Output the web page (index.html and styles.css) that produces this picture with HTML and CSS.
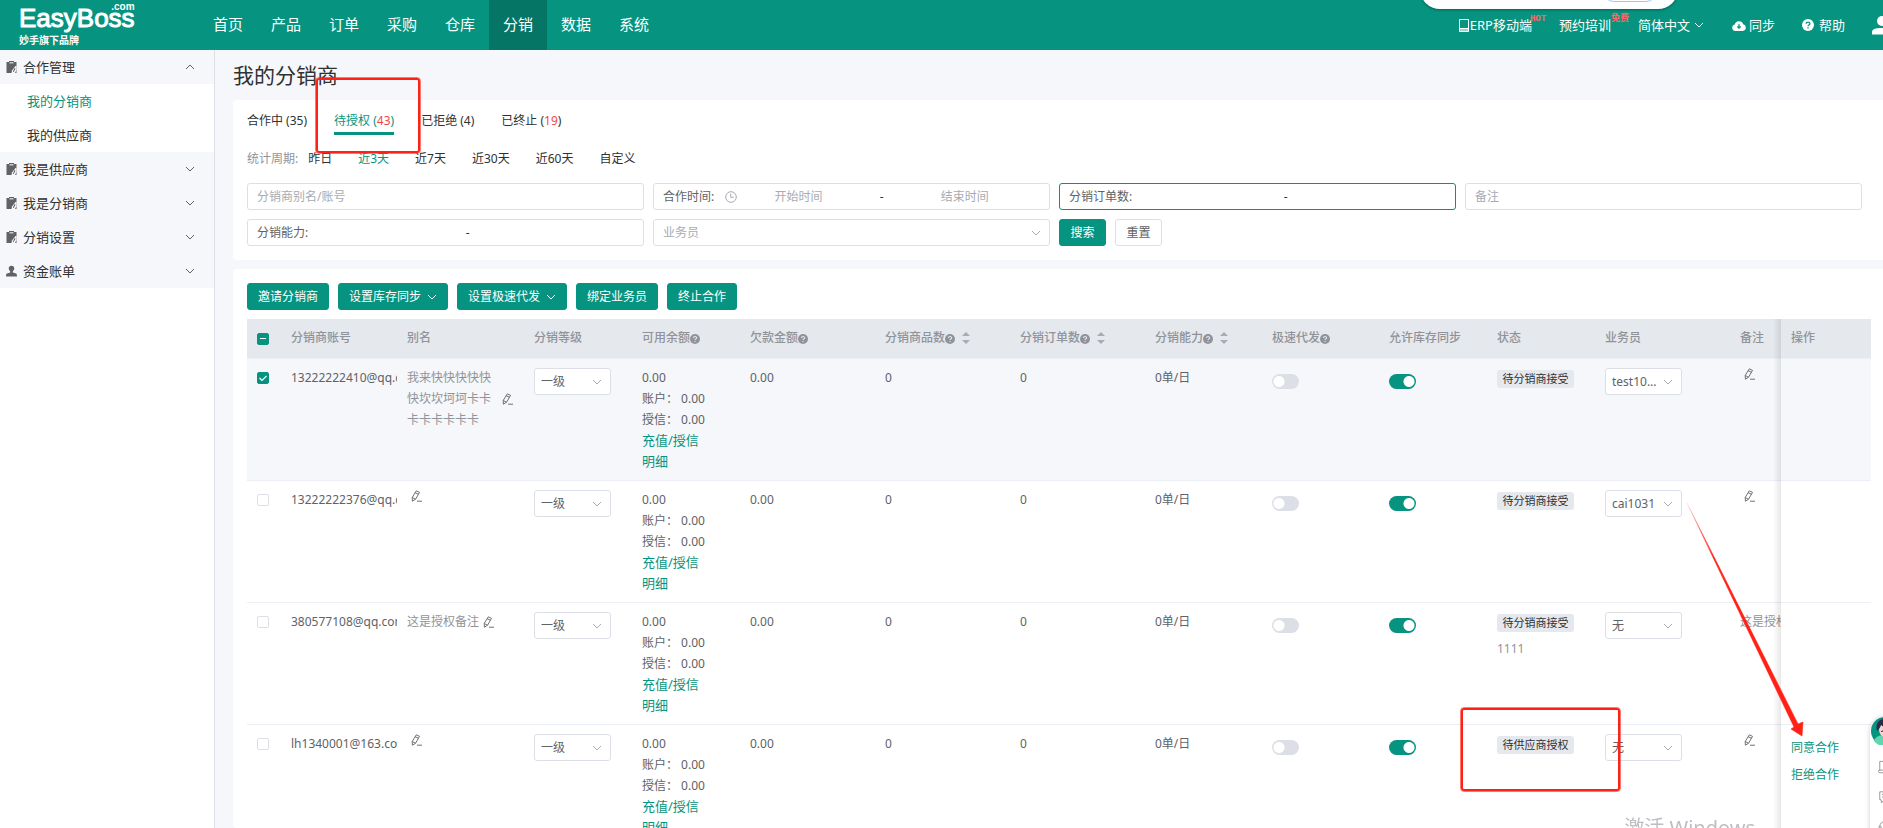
FILE: index.html
```html
<!DOCTYPE html>
<html lang="zh-CN">
<head>
<meta charset="utf-8">
<title>我的分销商 - EasyBoss</title>
<link rel="stylesheet" href="styles.css">
</head>
<body>
<svg class="sprite" aria-hidden="true">
  <symbol id="i-down" viewBox="0 0 10 10"><path d="M1 3l4 4 4-4" fill="none" stroke="currentColor"/></symbol>
  <symbol id="i-up" viewBox="0 0 10 10"><path d="M1 7l4-4 4 4" fill="none" stroke="currentColor"/></symbol>
  <symbol id="i-clip" viewBox="0 0 10 12"><path d="M0 1h2.500V0h5v1H10v11H0z" fill="#606266"/><path d="M3 1h4v1.500H3z" fill="#c5c8ce"/><path d="M9 5L5.500 9.500 5 12h3.500L10 9V5z" fill="#f5f7fa"/><path d="M8 7l1 .7L7.200 11H6.300z" fill="#606266"/></symbol>
  <symbol id="i-person" viewBox="0 0 12 12"><circle cx="6" cy="3.300" r="3"/><path d="M4.500 6h3v1.500l3.500 1.300c.6.300 1 1.200 1 3.200H0c0-2 .4-2.900 1-3.200l3.500-1.300z"/></symbol>
  <symbol id="i-pen" viewBox="0 0 12 12"><g fill="none" stroke="currentColor" stroke-width=".9"><path d="M5.300.8L8.500 2.300 4.600 9.200 1.400 11.200 1.200 7.500z"/><path d="M4.100 2.700l3.300 1.500M1.300 7.600l3.200 1.600M6 11.200h5"/></g></symbol>
  <symbol id="i-q" viewBox="0 0 12 12"><circle cx="6" cy="6" r="6" fill="currentColor"/><path d="M4.200 4.800C4.200 2.500 7.900 2.500 7.900 4.700 7.900 6 6 6 6 7.300M6 8.300v1.300" fill="none" stroke="var(--q)" stroke-width="1.300"/></symbol>
  <symbol id="i-sort" viewBox="0 0 8 12"><path d="M4 0l4 4H0zM4 12l4-4H0z" fill="#a8abb2"/></symbol>
</svg>

<div class="app">
  <header class="topbar">
    <a class="brand" href="#"><span class="brand-name">EasyBoss<span class="brand-com">.com</span></span><span class="brand-sub">妙手旗下品牌</span></a>
    <nav class="nav">
      <a href="#">首页</a><a href="#">产品</a><a href="#">订单</a><a href="#">采购</a><a href="#">仓库</a><a href="#" class="on">分销</a><a href="#">数据</a><a href="#">系统</a>
    </nav>
    <div class="tools">
      <a href="#"><svg class="phone" viewBox="0 0 10 13"><path d="M.5.5h9v12h-9zM1 9.500h8" fill="none" stroke="#fff"/><path d="M1 10h8v2.500H1z" fill="#fff" opacity=".6"/></svg>ERP移动端<span class="badge hot">HOT</span></a>
      <a href="#">预约培训<span class="badge">免费</span></a>
      <a href="#">简体中文<svg class="chev lang"><use href="#i-down"/></svg></a>
      <a href="#"><svg class="cloud" viewBox="0 0 14 11"><path d="M3.500 11a3.300 3.300 0 0 1-.8-6.500A4.400 4.400 0 0 1 11.200 4.300 3.400 3.400 0 0 1 10.700 11z" fill="#fff"/><path d="M7 4v4M5.300 6.500L7 8.200l1.700-1.700" fill="none" stroke="#069480" stroke-width="1.200"/></svg>同步</a>
      <a href="#"><svg class="help"><use href="#i-q"/></svg>帮助</a>
      <a href="#" aria-label="个人中心"><svg class="me" viewBox="0 0 20 19"><circle cx="10" cy="5" r="5" fill="#fff"/><path d="M0 18.500v-2C0 13 3 12 10 12s10 1 10 4.500v2z" fill="#fff"/></svg></a>
    </div>
    <div class="pill"><i></i></div>
  </header>

  <div class="body">
    <aside class="side">
      <button class="group"><svg class="gi"><use href="#i-clip"/></svg>合作管理<svg class="chev"><use href="#i-up"/></svg></button>
      <a class="sub on" href="#">我的分销商</a>
      <a class="sub" href="#">我的供应商</a>
      <button class="group"><svg class="gi"><use href="#i-clip"/></svg>我是供应商<svg class="chev"><use href="#i-down"/></svg></button>
      <button class="group"><svg class="gi"><use href="#i-clip"/></svg>我是分销商<svg class="chev"><use href="#i-down"/></svg></button>
      <button class="group"><svg class="gi"><use href="#i-clip"/></svg>分销设置<svg class="chev"><use href="#i-down"/></svg></button>
      <button class="group"><svg class="gi"><use href="#i-person"/></svg>资金账单<svg class="chev"><use href="#i-down"/></svg></button>
    </aside>

    <main class="main">
      <h1>我的分销商</h1>

      <section class="card filters">
        <div class="tabs">
          <button>合作中 (35)</button>
          <button class="on">待授权 (<em>43</em>)</button>
          <button>已拒绝 (4)</button>
          <button>已终止 (<em>19</em>)</button>
        </div>
        <div class="period">
          <span>统计周期:</span>
          <div class="days"><button>昨日</button><button class="on">近3天</button><button>近7天</button><button>近30天</button><button>近60天</button><button>自定义</button></div>
        </div>
        <form class="grid">
          <div class="field"><input aria-label="分销商别名/账号" placeholder="分销商别名/账号"></div>
          <div class="field time"><label for="t1">合作时间:</label><svg class="clock" viewBox="0 0 12 12"><g fill="none" stroke="#a8abb2"><circle cx="6" cy="6" r="5.300"/><path d="M5.700 2.800v3.500h3"/></g></svg><input id="t1" placeholder="开始时间"><b>-</b><input aria-label="结束时间" placeholder="结束时间"></div>
          <div class="field range focus"><label for="n1">分销订单数:</label><input id="n1"><b>-</b><input aria-label="分销订单数上限"></div>
          <div class="field"><input aria-label="备注" placeholder="备注"></div>
          <div class="field range"><label for="c1">分销能力:</label><input id="c1"><b>-</b><input aria-label="分销能力上限"></div>
          <select class="field pick" aria-label="业务员"><option>业务员</option></select>
          <div class="acts"><button type="button" class="btn primary">搜索</button><button type="button" class="btn">重置</button></div>
        </form>
      </section>

      <section class="card list">
        <div class="bar">
          <button class="btn primary">邀请分销商</button>
          <button class="btn primary">设置库存同步<svg class="chev"><use href="#i-down"/></svg></button>
          <button class="btn primary">设置极速代发<svg class="chev"><use href="#i-down"/></svg></button>
          <button class="btn primary">绑定业务员</button>
          <button class="btn primary">终止合作</button>
        </div>
        <div class="scroller">
          <table>
            <colgroup><col class="w34"><col class="w116"><col class="w127"><col class="w108"><col class="w108"><col class="w135"><col class="w135"><col class="w135"><col class="w117"><col class="w117"><col class="w108"><col class="w108"><col class="w135"><col class="w135"><col class="w90"></colgroup>
            <thead>
              <tr>
                <th><input type="checkbox" class="box part" aria-label="全选"></th>
                <th>分销商账号</th><th>别名</th><th>分销等级</th>
                <th>可用余额<svg class="q"><use href="#i-q"/></svg></th>
                <th>欠款金额<svg class="q"><use href="#i-q"/></svg></th>
                <th>分销商品数<svg class="q"><use href="#i-q"/></svg><svg class="sort"><use href="#i-sort"/></svg></th>
                <th>分销订单数<svg class="q"><use href="#i-q"/></svg><svg class="sort"><use href="#i-sort"/></svg></th>
                <th>分销能力<svg class="q"><use href="#i-q"/></svg><svg class="sort"><use href="#i-sort"/></svg></th>
                <th>极速代发<svg class="q"><use href="#i-q"/></svg></th>
                <th>允许库存同步</th><th>状态</th><th>业务员</th><th>备注</th><th class="fix">操作</th>
              </tr>
            </thead>
            <tbody>
              <tr class="sel">
                <td><input type="checkbox" class="box" checked aria-label="选择"></td>
                <td class="acc">13222222410@qq.com</td>
                <td><div class="note"><span>我来快快快快快快坎坎坷坷卡卡卡卡卡卡卡卡</span><svg class="pen"><use href="#i-pen"/></svg></div></td>
                <td><select class="mini" aria-label="分销等级"><option>一级</option></select></td>
                <td>0.00<br>账户： 0.00<br>授信： 0.00<br><a href="#">充值/授信</a><a href="#">明细</a></td>
                <td>0.00</td><td>0</td><td>0</td><td>0单/日</td>
                <td><input type="checkbox" class="switch" aria-label="极速代发"></td>
                <td><input type="checkbox" class="switch" checked aria-label="允许库存同步"></td>
                <td><span class="tag">待分销商接受</span></td>
                <td><select class="mini" aria-label="业务员"><option>test10...</option></select></td>
                <td><div class="note"><svg class="pen"><use href="#i-pen"/></svg></div></td>
                <td class="fix"></td>
              </tr>
              <tr>
                <td><input type="checkbox" class="box" aria-label="选择"></td>
                <td class="acc">13222222376@qq.com</td>
                <td><div class="note"><svg class="pen"><use href="#i-pen"/></svg></div></td>
                <td><select class="mini" aria-label="分销等级"><option>一级</option></select></td>
                <td>0.00<br>账户： 0.00<br>授信： 0.00<br><a href="#">充值/授信</a><a href="#">明细</a></td>
                <td>0.00</td><td>0</td><td>0</td><td>0单/日</td>
                <td><input type="checkbox" class="switch" aria-label="极速代发"></td>
                <td><input type="checkbox" class="switch" checked aria-label="允许库存同步"></td>
                <td><span class="tag">待分销商接受</span></td>
                <td><select class="mini" aria-label="业务员"><option>cai1031</option></select></td>
                <td><div class="note"><svg class="pen"><use href="#i-pen"/></svg></div></td>
                <td class="fix"></td>
              </tr>
              <tr>
                <td><input type="checkbox" class="box" aria-label="选择"></td>
                <td class="acc">380577108@qq.com</td>
                <td><div class="note"><span>这是授权备注</span><svg class="pen"><use href="#i-pen"/></svg></div></td>
                <td><select class="mini" aria-label="分销等级"><option>一级</option></select></td>
                <td>0.00<br>账户： 0.00<br>授信： 0.00<br><a href="#">充值/授信</a><a href="#">明细</a></td>
                <td>0.00</td><td>0</td><td>0</td><td>0单/日</td>
                <td><input type="checkbox" class="switch" aria-label="极速代发"></td>
                <td><input type="checkbox" class="switch" checked aria-label="允许库存同步"></td>
                <td><span class="tag">待分销商接受</span><div class="reason">1111</div></td>
                <td><select class="mini" aria-label="业务员"><option>无</option></select></td>
                <td><div class="note"><span>这是授权备注</span><svg class="pen"><use href="#i-pen"/></svg></div></td>
                <td class="fix"></td>
              </tr>
              <tr>
                <td><input type="checkbox" class="box" aria-label="选择"></td>
                <td class="acc">lh1340001@163.com</td>
                <td><div class="note"><svg class="pen"><use href="#i-pen"/></svg></div></td>
                <td><select class="mini" aria-label="分销等级"><option>一级</option></select></td>
                <td>0.00<br>账户： 0.00<br>授信： 0.00<br><a href="#">充值/授信</a><a href="#">明细</a></td>
                <td>0.00</td><td>0</td><td>0</td><td>0单/日</td>
                <td><input type="checkbox" class="switch" aria-label="极速代发"></td>
                <td><input type="checkbox" class="switch" checked aria-label="允许库存同步"></td>
                <td><span class="tag">待供应商授权</span></td>
                <td><select class="mini" aria-label="业务员"><option>无</option></select></td>
                <td><div class="note"><svg class="pen"><use href="#i-pen"/></svg></div></td>
                <td class="fix ops"><a href="#">同意合作</a><a href="#">拒绝合作</a></td>
              </tr>
            </tbody>
          </table>
        </div>
      </section>
    </main>
  </div>

  <div class="watermark">激活 Windows</div>
  <div class="dock">
    <svg class="avatar" viewBox="0 0 28 28"><circle cx="14" cy="14" r="14" fill="#069480"/><path d="M3 24c1-4 5-6 11-6s10 2 11 6a14 14 0 0 1-22 0z" fill="#5fd6ae"/><path d="M8 12c0 5 3 8 6 8s6-3 6-8V8H8z" fill="#f9d3cd"/><path d="M6 14C4 6 8 2 14 2s10 4 8 12l-2-4c-4 1-8 0-10-2-1 3-2 4-4 6z" fill="#2c2a45"/><path d="M10 14.500l2-.5" stroke="#2c2a45"/></svg>
    <svg class="di" viewBox="0 0 16 16"><path d="M2 1h11v13H2a1.500 1.500 0 0 1 0-3h11M2 1v11" fill="none" stroke="#8a8d93"/></svg>
    <svg class="di" viewBox="0 0 16 16"><path d="M2 1.500h12v9H7L4 14l-.5-3.500H2zM4.500 4.500h7M4.500 7.500h5" fill="none" stroke="#8a8d93"/></svg>
    <svg class="di" viewBox="0 0 16 16"><path d="M2 7a6 6 0 0 1 12 0M1 7h2.500v4H2zM15 7h-2.500v4H14zM5 14l3-3 3 3" fill="none" stroke="#8a8d93"/></svg>
  </div>
  <div class="mark m1"></div>
  <div class="mark m2"></div>
  <svg class="arrow" viewBox="0 0 120 236"><defs><linearGradient id="fade" gradientUnits="userSpaceOnUse" x1="2" y1="0" x2="28" y2="56"><stop offset="0" stop-color="#ff2116" stop-opacity=".1"/><stop offset="1" stop-color="#ff2116"/></linearGradient></defs><path d="M1 0L112 221 117 219 116 233 105 226 108 224z" fill="url(#fade)" stroke="url(#fade)" stroke-width=".6"/></svg>
</div>
</body>
</html>
```
FILE: styles.css
```css
* { box-sizing: border-box; }
:root { --green: #069480; --line: #dcdfe6; --bg: #f5f7fb; --red: #ff2116; --q: #e5e8ed; }
body { margin: 0; font: 12px/21px "Noto Sans", "Noto Sans CJK SC", sans-serif; color: #303133; }
button, input, select { font: inherit; color: inherit; margin: 0; }
button { border: 0; padding: 0; background: none; cursor: pointer; }
a { color: var(--green); text-decoration: none; }
svg { flex: none; }
.sprite { position: absolute; width: 0; height: 0; }
.chev { width: 10px; height: 10px; }
.app { position: relative; height: 100vh; overflow: hidden; display: flex; flex-direction: column; }

.topbar { position: relative; flex: none; display: flex; height: 50px; background: var(--green); overflow: hidden; }
.topbar a { color: #fff; }
.brand { width: 199px; padding: 4px 0 0 19px; display: flex; flex-direction: column; align-items: flex-start; }
.brand-name { position: relative; font: 26px/29px "Liberation Sans", sans-serif; -webkit-text-stroke: 1px #fff; }
.brand-com { position: absolute; right: 0; top: -3px; font-size: 10px; line-height: 12px; -webkit-text-stroke: 0; font-weight: bold; }
.brand-sub { font-size: 10px; line-height: 14px; font-weight: bold; }
.nav { display: flex; font-size: 15px; line-height: 48px; }
.nav a { padding: 0 14px; }
.nav .on { background: #057565; }
.tools { margin-left: auto; margin-right: -9px; display: flex; align-items: center; gap: 27px; font-size: 13px; white-space: nowrap; }
.tools a { position: relative; display: flex; align-items: center; }
.phone { width: 10px; height: 13px; margin-right: 1px; }
.lang { margin: 0 1px 0 4px; }
.cloud { width: 14px; height: 11px; margin-right: 3px; }
.help { width: 12px; height: 12px; margin-right: 5px; color: #fff; --q: #069480; }
.me { width: 20px; height: 19px; }
.badge { position: absolute; left: 100%; top: -3px; font-size: 9px; line-height: 12px; font-weight: bold; color: #ff6464; }
.hot { font-family: "Liberation Mono", monospace; margin-left: -2px; top: -2px; }
.pill { position: absolute; right: 205px; top: -31px; width: 258px; height: 40px; border-radius: 20px; background: #fff; box-shadow: 0 1px 3px rgba(0, 0, 0, .35); }
.pill i { position: absolute; right: 20px; top: 9px; width: 56px; height: 24px; border: 1px solid #a6c5f7; border-radius: 12px; }

.body { flex: 1; min-height: 0; display: flex; }
.side { flex: none; width: 215px; border-right: 1px solid var(--line); display: flex; flex-direction: column; font-size: 13px; background: #fff; }
.group { display: flex; align-items: center; height: 34px; padding: 0 19px 0 6px; background: var(--bg); }
.group .chev { margin-left: auto; color: #606266; }
.gi { width: 11px; height: 12px; margin-right: 6px; fill: #606266; }
.sub { height: 34px; line-height: 34px; padding-left: 27px; color: #303133; }
.sub.on, .tabs .on, .days .on { color: var(--green); }

.main { flex: 1; min-width: 0; padding: 10px 0 0 18px; background: var(--bg); display: flex; flex-direction: column; }
h1 { margin: 0 0 10px; font-size: 21px; line-height: 30px; font-weight: 400; }
.card { background: #fff; border-radius: 4px 0 0 4px; }
.filters { padding: 11px 21px 14px 14px; margin-bottom: 9px; }
.tabs { display: flex; gap: 27px; margin-bottom: 13px; }
.tabs button { line-height: 20px; padding-bottom: 1px; border-bottom: 3px solid transparent; }
.tabs .on { border-color: var(--green); }
em { font-style: normal; color: #f04848; }
.period { display: flex; gap: 10px; margin-bottom: 14px; color: #909399; }
.days { display: flex; gap: 26px; color: #303133; }
.grid { display: grid; grid-template-columns: repeat(4, 1fr); gap: 9px; }
.field { display: flex; align-items: center; width: 100%; height: 27px; padding: 0 9px; border: 1px solid var(--line); border-radius: 3px; background: #fff; color: #606266; }
.field input { flex: 1; min-width: 0; width: 100%; border: 0; padding: 0; background: none; outline: 0; }
.field b { font-weight: 400; color: #303133; }
::placeholder { color: #a8abb2; opacity: 1; }
.clock { width: 12px; height: 12px; margin: 0 3px 0 11px; }
.time { padding-right: 26px; }
.time input { text-align: center; }
.time b { width: 50px; text-align: center; }
.range { padding-right: 16px; }
.focus { border-color: var(--green); }
.pick, .mini { appearance: none; background: #fff url("data:image/svg+xml,%3Csvg xmlns='http://www.w3.org/2000/svg' viewBox='0 0 10 10'%3E%3Cpath d='M1 3l4 4 4-4' fill='none' stroke='%23a8abb2'/%3E%3C/svg%3E") no-repeat right 8px center / 10px 10px; }
.pick { color: #a8abb2; }
.acts, .bar { display: flex; gap: 9px; }
.acts .btn { width: 47px; justify-content: center; }
.btn { display: flex; align-items: center; height: 27px; padding: 0 10px; border: 1px solid var(--line); border-radius: 3px; color: #606266; background: #fff; white-space: nowrap; }
.btn.primary { background: var(--green); border-color: var(--green); color: #fff; }
.btn .chev { margin-left: 6px; }

.list { flex: 1; min-height: 0; padding: 14px 12px 0 14px; }
.bar { margin-bottom: 9px; }
.scroller { overflow: hidden; }
table { table-layout: fixed; width: 100%; min-width: 1708px; border-collapse: separate; border-spacing: 0; color: #606266; }
.w34 { width: 34px; } .w90 { width: 90px; } .w108 { width: 108px; } .w116 { width: 116px; }
.w117 { width: 117px; } .w127 { width: 127px; } .w135 { width: 135px; }
th { height: 40px; padding: 0 0 2px 10px; text-align: left; font-weight: 500; color: #909399; background: #e5e8ed; border-bottom: 1px solid #ebeef5; white-space: nowrap; }
td { padding: 8px 10px; vertical-align: top; background: #fff; border-bottom: 1px solid #ebeef5; }
.sel td { background: var(--bg); }
td a { display: block; font-size: 13px; }
.acc { padding-right: 0; overflow: hidden; white-space: nowrap; }
.q { width: 10px; height: 10px; vertical-align: -2px; }
.sort { width: 8px; height: 12px; margin-left: 7px; vertical-align: -2px; }
.note { display: flex; align-items: center; color: #909399; }
.note span { overflow-wrap: anywhere; }
.pen { width: 12px; height: 14px; margin-left: 4px; color: #606266; }
.fix { position: sticky; right: 0; }
.fix::before { content: ""; position: absolute; left: -8px; top: 0; bottom: -1px; width: 8px; background: linear-gradient(to left, rgba(0, 0, 0, .09), transparent); }
.ops { padding-top: 9px; }
.ops a { font-size: 12px; line-height: 27px; }
.mini { display: block; width: 77px; height: 27px; margin-top: 1px; padding: 0 20px 0 6px; border: 1px solid var(--line); border-radius: 3px; background-color: #fff; }
.box { appearance: none; display: block; width: 12px; height: 12px; margin-top: 5px; border: 1px solid var(--line); border-radius: 2px; background: #fff; }
th .box { margin: 2px 0 0; }
.box:checked { border-color: var(--green); background: var(--green) url("data:image/svg+xml,%3Csvg xmlns='http://www.w3.org/2000/svg' viewBox='0 0 10 10'%3E%3Cpath d='M1.500 5l2.500 2.500L8.500 3' fill='none' stroke='%23fff' stroke-width='1.200'/%3E%3C/svg%3E"); }
.box.part { border-color: var(--green); background: linear-gradient(#fff, #fff) center / 6px 1px no-repeat var(--green); }
.switch { appearance: none; display: block; width: 27px; height: 15px; margin-top: 7px; border-radius: 8px; background: radial-gradient(circle at 7px 50%, #fff 5px, transparent 6px) var(--line); }
.switch:checked { background: radial-gradient(circle at 20px 50%, #fff 5px, transparent 6px) var(--green); }
.tag { display: block; width: 77px; margin-top: 3px; border-radius: 3px; background: #e5e8ed; color: #303133; font-size: 11px; line-height: 18px; text-align: center; white-space: nowrap; }
.reason { margin-top: 6px; color: #909399; }

.watermark { position: absolute; right: 128px; bottom: -14px; font-size: 20px; line-height: 28px; color: #bcbec2; }
.dock { position: absolute; right: -17px; top: 717px; width: 30px; height: 140px; display: flex; flex-direction: column; align-items: center; gap: 15px; border-radius: 15px; background: #fff; box-shadow: 0 0 5px rgba(0, 0, 0, .2); }
.avatar { width: 28px; height: 28px; }
.di { width: 14px; height: 15px; }
.mark { position: absolute; border: 2px solid var(--red); outline: 1px solid rgba(255, 33, 22, .6); border-radius: 3px; }
.m1 { left: 316px; top: 78px; width: 104px; height: 75px; }
.m2 { left: 1461px; top: 708px; width: 159px; height: 83px; }
.arrow { position: absolute; left: 1686px; top: 503px; width: 120px; height: 236px; }
```
